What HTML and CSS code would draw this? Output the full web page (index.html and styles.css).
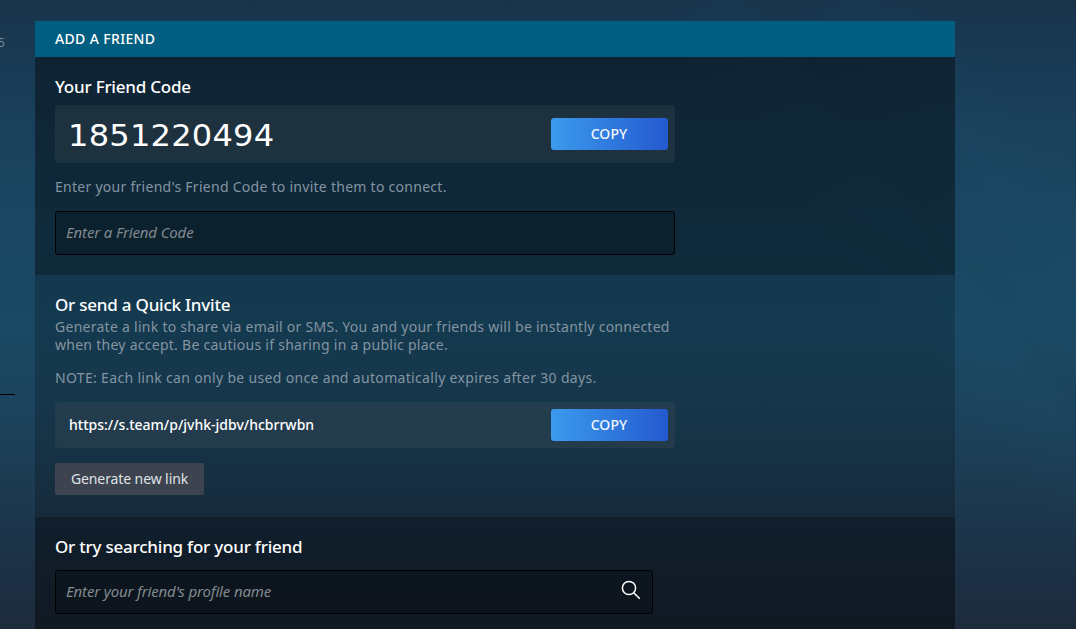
FILE: index.html
```html
<!DOCTYPE html>
<html lang="en">
<head>
<meta charset="utf-8">
<title>Add a Friend</title>
<link rel="stylesheet" href="styles.css">
</head>
<body>
<div class="page">
  <aside class="side">
    <span class="side-count">5</span>
    <div class="side-rule"></div>
  </aside>
  <main class="panel">
    <h1 class="panel-title">ADD A FRIEND</h1>
    <section class="section section-code">
      <h2 class="heading">Your Friend Code</h2>
      <div class="share share-code">
        <span class="code">1851220494</span>
        <button class="copy">COPY</button>
      </div>
      <p class="text hint">Enter your friend's Friend Code to invite them to connect.</p>
      <input class="field" type="text" placeholder="Enter a Friend Code">
    </section>
    <section class="section section-invite">
      <h2 class="heading">Or send a Quick Invite</h2>
      <p class="text">Generate a link to share via email or SMS. You and your friends will be instantly connected<br>when they accept. Be cautious if sharing in a public place.</p>
      <p class="text note">NOTE: Each link can only be used once and automatically expires after 30 days.</p>
      <div class="share share-link">
        <span class="link">https://s.team/p/jvhk-jdbv/hcbrrwbn</span>
        <button class="copy">COPY</button>
      </div>
      <button class="generate">Generate new link</button>
    </section>
    <section class="section section-search">
      <h2 class="heading">Or try searching for your friend</h2>
      <div class="search">
        <input class="field search-field" type="text" placeholder="Enter your friend's profile name">
        <svg class="search-icon" width="20" height="20" viewBox="0 0 20 20" fill="none" stroke="#fff" stroke-width="1.5"><circle cx="8" cy="8" r="6.6"/><path d="M12.7 12.7L18.8 18.8"/></svg>
      </div>
    </section>
  </main>
</div>
</body>
</html>
```
FILE: styles.css
```css
* { box-sizing: border-box; }
body {
  margin: 0;
  height: 629px;
  overflow: hidden;
  font-family: "Noto Sans", "Open Sans", sans-serif;
  font-size: 14px;
  color: #fff;
  background:
    linear-gradient(52deg, transparent 72%, rgba(28, 92, 125, .08) 78%, transparent 80%, rgba(28, 92, 125, .07) 86%, transparent 92%),
    linear-gradient(180deg, #18344b 0, #193a54 60px, #1a415c 130px, #1a4661 220px, #1a4963 330px, #1c435d 410px, #1c3a50 490px, #1c3146 560px, #1d2b3c 629px);
}
.page { display: flex; height: 629px; }
.side { width: 35px; padding-top: 36px; overflow: hidden; }
.side-count { display: block; margin-left: -2px; height: 14px; line-height: 14px; font-size: 12px; color: #718697; }
.side-rule { width: 15px; height: 1px; margin-top: 344px; background: #000; }
.panel { width: 920px; margin-top: 21px; }
.panel-title {
  margin: 0; padding-left: 20px; height: 36px; line-height: 36px;
  background: #005e80; font-size: 14px; font-weight: 500; letter-spacing: .35px;
}
.section { padding: 20px 20px 0; }
.section-code { height: 218px; background: rgba(0, 0, 0, .4); }
.section-invite { height: 242px; background: rgba(0, 0, 0, .2); }
.section-search { height: 120px; background: rgba(0, 0, 0, .41); }
.heading { margin: 0; height: 20px; line-height: 20px; font-size: 17px; font-weight: 500; letter-spacing: -.22px; white-space: nowrap; }
.share {
  display: flex; align-items: center; justify-content: space-between;
  width: 620px; padding: 0 7px 0 14px; border-radius: 4px;
  background: rgba(92, 101, 98, .18);
}
.share-code { height: 58px; margin-top: 8px; }
.share-link { height: 46px; margin-top: 15px; }
.code {
  margin: 3px 0 0 -1px;
  font-family: "DejaVu Sans", sans-serif; font-size: 30px; line-height: 36px; letter-spacing: .2px;
  transform: scaleX(1.07); transform-origin: left;
}
.link { margin-top: -1px; font-size: 14px; font-weight: 500; letter-spacing: 0; }
.copy {
  width: 117px; height: 32px; padding: 0 1px 0 0; border: 0; border-radius: 3px;
  background: linear-gradient(90deg, #3b9bed 0, #2459cf 100%);
  color: #f2f8ff; font: 500 14px/32px "Noto Sans", sans-serif; letter-spacing: .1px;
}
.text { margin: 0; line-height: 18px; font-size: 14px; color: #8494a1; letter-spacing: .27px; white-space: nowrap; }
.section-invite .heading + .text { margin-top: 3px; }
.hint { margin-top: 15px; }
.section-invite .note { margin-top: 15px; letter-spacing: .33px; }
.field {
  display: block; width: 620px; height: 44px; margin: 15px 0 0; padding: 0 10px 2px;
  border: 1px solid #000; border-radius: 3px; background: rgba(0, 0, 0, .2);
  color: #fff; font: 15px "Noto Sans", sans-serif; letter-spacing: -.15px;
}
.field::placeholder { color: #828a8e; font-style: italic; opacity: 1; }
.generate {
  display: block; width: 149px; height: 32px; margin-top: 15px; padding: 0;
  border: 0; border-radius: 2px; background: #3d4450; color: #dfe3e6;
  font: 14px/32px "Noto Sans", sans-serif; letter-spacing: -.1px;
}
.search { position: relative; width: 598px; margin-top: 13px; }
.search-field { width: 598px; margin: 0; }
.search-icon { position: absolute; right: 12px; top: 10px; }
```
